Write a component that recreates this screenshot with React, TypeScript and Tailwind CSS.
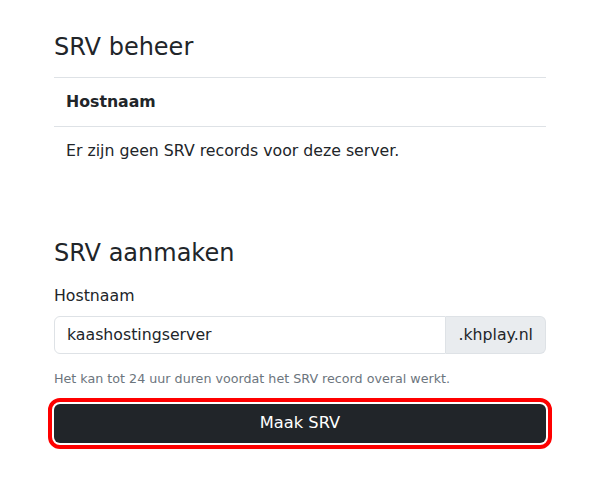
export default function App() {
  return (
    <div className="min-h-screen bg-white font-['DejaVu_Sans',sans-serif] text-[#212529]">
      <div className="ml-[54px] w-[492px] pt-[33px]">
        <h3 className="mb-[15px] text-[24px] leading-[29px]">SRV beheer</h3>

        <table className="w-full text-left text-[15.75px]">
          <thead>
            <tr className="border-y border-[#dee2e6]">
              <th className="p-3 font-bold leading-6">Hostnaam</th>
            </tr>
          </thead>
        </table>
        <p className="p-3 text-[15.75px] leading-6">Er zijn geen SRV records voor deze server.</p>

        <h3 className="mt-[64px] mb-[16px] text-[24px] leading-[29px]">SRV aanmaken</h3>

        <label className="mb-2 block text-[15.75px] leading-6">Hostnaam</label>
        <div className="flex h-[38px] w-full">
          <input
            type="text"
            defaultValue="kaashostingserver"
            className="min-w-0 flex-1 rounded-l-md border border-[#dee2e6] px-3 text-[15.75px] text-[#212529] outline-none"
          />
          <span className="flex items-center rounded-r-md border border-l-0 border-[#dee2e6] bg-[#e9ecef] px-3 text-[15.75px]">
            .khplay.nl
          </span>
        </div>
        <p className="mt-[15px] text-[12.7px] leading-[19px] text-[#6c757d]">
          Het kan tot 24 uur duren voordat het SRV record overal werkt.
        </p>

        <button className="mt-[16px] h-[39px] w-full rounded-md bg-[#212529] text-[16.25px] text-white outline-4 outline-offset-2 outline-[#ff0000]">
          Maak SRV
        </button>
      </div>
    </div>
  );
}
